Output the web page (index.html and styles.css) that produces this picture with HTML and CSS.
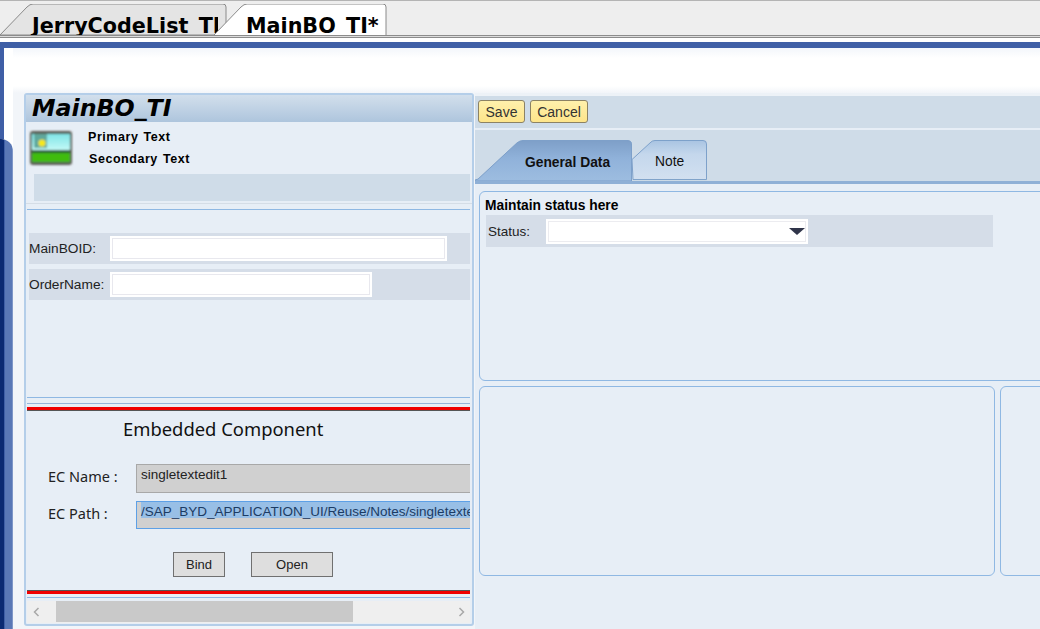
FILE: index.html
```html
<!DOCTYPE html>
<html lang="en">
<head>
<meta charset="utf-8">
<title>MainBO_TI</title>
<link rel="stylesheet" href="styles.css">
</head>
<body>
<header class="doctabs">
  <div class="doctab doctab-back">
    <svg class="tabshape" viewBox="0 0 227 31" preserveAspectRatio="none"><path d="M0 31 L27 3 Q30 0 33 0 L223 0 Q226 0 226 3 L226 24 L214 31 Z" fill="#e4e4e4" stroke="#8a8a8a"/></svg>
    <span class="doctab-text">JerryCodeList_TI</span>
  </div>
  <div class="doctab doctab-front">
    <svg class="tabshape" viewBox="0 0 173 31" preserveAspectRatio="none"><path d="M0 31 L27 3 Q30 0 33 0 L169 0 Q172 0 172 3 L172 31" fill="#fff" stroke="#8a8a8a"/></svg>
    <span class="doctab-text">MainBO_TI*</span>
  </div>
</header>
<div class="doctabs-rule"></div>

<div class="shell">
  <div class="edge">
    <div class="edge-top"></div>
    <div class="edge-body"></div>
  </div>
  <div class="work">
    <section class="left">
      <h1 class="left-title">MainBO_TI</h1>
      <div class="identity">
        <svg class="pic" width="46" height="38" viewBox="0 0 46 38">
          <defs>
            <linearGradient id="sky" x1="0" y1="0" x2="0" y2="1"><stop offset="0" stop-color="#7fe4e6"/><stop offset="1" stop-color="#c8fbf8"/></linearGradient>
            <filter id="soft" x="-10%" y="-10%" width="120%" height="120%"><feGaussianBlur stdDeviation="0.8"/></filter>
          </defs>
          <g filter="url(#soft)">
            <rect x="2" y="2" width="42" height="34" rx="3" fill="#585c52"/>
            <rect x="4" y="5" width="38" height="17" fill="url(#sky)"/>
            <rect x="4" y="21" width="38" height="3" fill="#2a5a30"/>
            <rect x="4" y="24" width="38" height="9" fill="#3fbc08"/>
            <rect x="6" y="5" width="13" height="14" fill="#5fa79c"/>
            <circle cx="14" cy="14" r="3.6" fill="#f6e81a"/>
          </g>
        </svg>
        <div class="identity-text">
          <div class="primary">Primary Text</div>
          <div class="secondary">Secondary Text</div>
        </div>
      </div>
      <div class="gray-bar"></div>
      <div class="rule-soft"></div>
      <div class="rule-blue"></div>
      <div class="fields">
        <div class="field-row">
          <label class="field-label">MainBOID:</label>
          <div class="input input-long"></div>
        </div>
        <div class="field-row">
          <label class="field-label">OrderName:</label>
          <div class="input input-short"></div>
        </div>
      </div>
      <div class="rule-blue rule-a"></div>
      <div class="rule-blue rule-b"></div>
      <div class="red-top"></div>
      <div class="ec">
        <h2 class="ec-title">Embedded Component</h2>
        <div class="ec-row ec-row-name">
          <span class="ec-label">EC Name :</span>
          <div class="ec-input">singletextedit1</div>
        </div>
        <div class="ec-row ec-row-path">
          <span class="ec-label">EC Path :</span>
          <div class="ec-input ec-input-focus"><span class="selected">/SAP_BYD_APPLICATION_UI/Reuse/Notes/singletextedit.EC.uicomponent</span></div>
        </div>
        <div class="ec-actions">
          <button class="ec-btn ec-bind">Bind</button>
          <button class="ec-btn ec-open">Open</button>
        </div>
      </div>
      <div class="red-bottom"></div>
      <div class="rule-blue rule-c"></div>
      <div class="hscroll">
        <svg class="arrow" width="9" height="12" viewBox="0 0 9 12"><path d="M6.5 2 L2.5 6 L6.5 10" fill="none" stroke="#a8a8a8" stroke-width="1.5"/></svg>
        <div class="hscroll-track"><div class="hscroll-thumb"></div></div>
        <svg class="arrow" width="9" height="12" viewBox="0 0 9 12"><path d="M2.5 2 L6.5 6 L2.5 10" fill="none" stroke="#a8a8a8" stroke-width="1.5"/></svg>
      </div>
    </section>

    <section class="right">
      <div class="toolbar">
        <button class="tool-btn tool-save">Save</button>
        <button class="tool-btn tool-cancel">Cancel</button>
      </div>
      <nav class="tabstrip">
        <div class="tab tab-active">
          <svg class="tabshape" viewBox="0 0 158 43" preserveAspectRatio="none">
            <defs><linearGradient id="act" x1="0" y1="0" x2="0" y2="1"><stop offset="0" stop-color="#7e9fc8"/><stop offset="0.45" stop-color="#90b2da"/><stop offset="1" stop-color="#9dbde0"/></linearGradient></defs>
            <path d="M0 42 L3 41 L42 3 Q45 .5 48 .5 L152 .5 Q156.500 .5 156.500 4 L156.500 43 L0 43 Z" fill="url(#act)" stroke="#7c9fc9"/>
          </svg>
          <span class="tab-text">General Data</span>
        </div>
        <div class="tab tab-idle">
          <svg class="tabshape" viewBox="0 0 76 42" preserveAspectRatio="none">
            <defs><linearGradient id="idl" x1="0" y1="0" x2="0" y2="1"><stop offset="0" stop-color="#a9c4e2"/><stop offset="0.35" stop-color="#c4d7ec"/><stop offset="1" stop-color="#d2e0f0"/></linearGradient></defs>
            <path d="M0 20 L18 3 Q20 .5 23 .5 L71 .5 Q74.500 .5 74.500 4 L74.500 40.500 L1 40.500 Z" fill="url(#idl)" stroke="#7c9fc9"/>
          </svg>
          <span class="tab-text">Note</span>
        </div>
      </nav>
      <div class="tab-rule"></div>
      <div class="tabbody">
        <div class="group group-status">
          <div class="group-title">Maintain status here</div>
          <div class="status-row">
            <label class="status-label">Status:</label>
            <div class="combo">
              <svg class="combo-arrow" width="16" height="7" viewBox="0 0 16 7"><path d="M0 0 H16 L8 7 Z" fill="#30354a"/></svg>
            </div>
          </div>
        </div>
        <div class="lower">
          <div class="group group-low"></div>
          <div class="group group-low"></div>
        </div>
      </div>
    </section>
  </div>
</div>
</body>
</html>
```

FILE: styles.css
```css
* { box-sizing: border-box; }
html, body { margin: 0; padding: 0; }
body {
  width: 1040px;
  height: 629px;
  overflow: hidden;
  background: #fff;
  font-family: "Liberation Sans", Arial, sans-serif;
  color: #111;
}

/* document tabs */
.doctabs {
  height: 35px;
  display: flex;
  align-items: flex-end;
  background: #eeeeee;
  border-top: 1px solid #b4b4b4;
}
.doctab {
  position: relative;
  height: 31px;
  overflow: hidden;
  flex: none;
}
.doctab-back { width: 227px; }
.doctab-front { width: 173px; margin-left: -13px; }
.tabshape {
  position: absolute;
  left: 0;
  top: 0;
  width: 100%;
  height: 100%;
}
.doctab-text {
  position: relative;
  display: block;
  font: bold 20.700px/25px "DejaVu Sans", sans-serif;
  color: #000;
  padding-top: 10px;
  white-space: nowrap;
  overflow: hidden;
}
.doctab-back .doctab-text { padding-left: 32px; margin-right: 9px; }
.doctab-front .doctab-text { padding-left: 32px; }
.doctabs-rule {
  height: 7px;
  border-top: 1px solid #8c8c8c;
  background: linear-gradient(#dcdcdc 0 1px, #8c8c8c 1px 2px, #fff 2px);
}

/* shell */
.shell {
  display: flex;
  height: 587px;
  border-top: 6px solid #3f5fa6;
}
.edge {
  width: 13px;
  flex: none;
  display: flex;
  flex-direction: column;
}
.edge-top {
  height: 91px;
  width: 4px;
  background: #3f5fa6;
}
.edge-body {
  flex: 1;
  border-top-right-radius: 12px;
  background: linear-gradient(90deg, #0b2a72 0 4px, #3f5fa6 4px 5px, #5a78b6 5px 12px, #7f97c8 12px);
}
.work {
  flex: 1;
  min-width: 0;
  display: grid;
  grid-template-columns: 450px 1fr;
  column-gap: 1px;
  padding: 45px 0 0 11px;
  background: linear-gradient(#f3f6fb 0, #fff 10px, #fff 38px, #f2f5f9 45px);
  align-items: start;
  overflow: hidden;
}

/* left panel */
.left {
  height: 533px;
  background: #e7eef6;
  border: 2px solid #b4cee9;
  border-radius: 3px;
  display: flex;
  flex-direction: column;
}
.left-title {
  height: 27px;
  margin: 0;
  padding-left: 6px;
  font: italic bold 23.700px/26px "DejaVu Sans", sans-serif;
  color: #000;
  background: linear-gradient(#d2dfec, #aec5dd);
}
.identity {
  height: 52px;
  display: flex;
  padding: 7px 0 0 2px;
}
.pic { flex: none; }
.identity-text {
  margin-left: 14px;
  padding-top: 1px;
  font-weight: bold;
  font-size: 12.500px;
  letter-spacing: .55px;
  word-spacing: 1px;
  color: #000;
}
.primary { height: 22px; line-height: 15px; }
.secondary { line-height: 15px; padding-left: 1px; }
.gray-bar {
  height: 27px;
  margin: 0 2px 0 8px;
  background: #cfdce8;
}
.rule-soft { height: 1px; margin-top: 2px; background: #d5dde6; }
.rule-blue { height: 1px; background: #8fb8e3; margin: 0 2px 0 1px; }
.rule-soft + .rule-blue { margin-top: 5px; }
.fields {
  height: 187px;
  padding: 23px 2px 0 3px;
  display: flex;
  flex-direction: column;
  gap: 5px;
}
.field-row {
  height: 31px;
  background: #d5dde8;
  display: flex;
  align-items: center;
}
.field-label {
  width: 81px;
  flex: none;
  font-size: 13.700px;
  color: #222;
}
.input {
  height: 25px;
  background: #fff;
  border: 2px solid #fff;
  box-shadow: inset 0 0 0 1px #e8e8ee;
}
.input-long { width: 337px; }
.input-short { width: 262px; }
.rule-b { margin-top: 5px; background: #96b4d8; }
.red-top {
  height: 4px;
  margin: 3px 2px 0 1px;
  background: linear-gradient(#f00000 0 3px, #555 3px);
}
.ec {
  height: 179px;
  padding: 0 2px 0 1px;
  display: flex;
  flex-direction: column;
  overflow: hidden;
}
.ec-title {
  margin: 6px 0 0 96px;
  height: 31px;
  font: 400 18.400px/24px "Noto Sans", sans-serif;
  color: #111;
}
.ec-row {
  display: flex;
  align-items: flex-start;
}
.ec-row-name { margin-top: 16px; height: 37px; }
.ec-row-path { height: 28px; }
.ec-label {
  width: 109px;
  flex: none;
  padding: 2px 0 0 21px;
  font: 14.500px/20px "Noto Sans", sans-serif;
  color: #222;
}
.ec-input {
  flex: 1;
  min-width: 0;
  height: 29px;
  padding: 0 0 0 4px;
  background: #d0d0d0;
  border: 1px solid #a8a8a8;
  border-right: 0;
  font: 13.500px/20px "Liberation Sans", sans-serif;
  color: #222;
  white-space: nowrap;
  overflow: hidden;
}
.ec-input-focus {
  height: 28px;
  border-color: #5da0e6;
  color: #1c3c64;
}
.selected { background: #98bfe6; display: block; width: max-content; height: 16px; }
.ec-actions {
  display: flex;
  margin: 23px 0 0 146px;
  gap: 26px;
}
.ec-btn {
  height: 25px;
  padding: 1px 0 0;
  background: #dedede;
  border: 1px solid #707070;
  border-radius: 0;
  font: 13px/20px "Liberation Sans", sans-serif;
  color: #222;
}
.ec-bind { width: 52px; }
.ec-open { width: 82px; }
.red-bottom {
  height: 4px;
  margin: 0 2px 0 1px;
  background: linear-gradient(#555 0 1px, #f00000 1px);
}
.rule-c { margin-top: 3px; }
.hscroll {
  height: 22px;
  margin: 3px 2px 0 1px;
  background: #efefef;
  display: flex;
  align-items: center;
  padding: 0 4px 0 5px;
}
.arrow { flex: none; }
.hscroll-track { flex: 1; height: 100%; padding-left: 15px; }
.hscroll-thumb { width: 297px; height: 21px; background: #c9c9c9; }

/* right side */
.right {
  display: flex;
  flex-direction: column;
  height: 536px;
  background: #e7eef6;
}
.toolbar {
  height: 37px;
  padding: 7px 0 0 3px;
  display: flex;
  align-items: flex-start;
  gap: 5px;
  background: linear-gradient(#edf2f7 0 3px, #cfdce8 3px 35px, #e7eef6 35px);
}
.tool-btn {
  height: 23px;
  padding: 0;
  background: linear-gradient(#fff0ac, #fee58a);
  border: 1px solid #8c8264;
  border-radius: 3px;
  font: 14px/20px "Liberation Sans", sans-serif;
  color: #333;
}
.tool-save { width: 47px; }
.tool-cancel { width: 58px; }
.tabstrip {
  height: 51px;
  padding-top: 10px;
  display: flex;
  align-items: flex-start;
  background: #cfdce8;
}
.tab { position: relative; flex: none; display: flex; align-items: center; }
.tab-active { width: 158px; height: 41px; padding: 4px 0 0 50px; }
.tab-idle { width: 76px; height: 41px; margin-left: -1px; padding: 2px 0 0 23px; }
.tab-text { position: relative; font-size: 13.800px; color: #111; }
.tab-active .tab-text { font-weight: bold; }
.tab-rule { height: 3px; background: #8fb0d6; }
.tabbody {
  flex: 1;
  padding: 7px 0 0 4px;
  display: flex;
  flex-direction: column;
  gap: 5px;
  background: #e7eef6;
}
.group {
  border: 1px solid #8fb8e3;
  border-radius: 6px;
  background: #e7eef6;
}
.group-status {
  width: 600px;
  height: 190px;
  padding: 6px 0 0 5px;
}
.group-title {
  font: bold 13.800px/16px "Liberation Sans", sans-serif;
  color: #000;
}
.status-row {
  width: 507px;
  height: 32px;
  margin: 1px 0 0 1px;
  background: #d5dde8;
  display: flex;
  align-items: center;
  padding-left: 2px;
}
.status-label { width: 58px; flex: none; font-size: 13.500px; color: #222; }
.combo {
  width: 262px;
  height: 25px;
  background: #fff;
  border: 2px solid #fff;
  box-shadow: inset 0 0 0 1px #ececf0;
  display: flex;
  align-items: center;
  justify-content: flex-end;
  padding-right: 1px;
}
.lower { display: flex; gap: 5px; width: 600px; }
.group-low { height: 190px; flex: none; }
.group-low:first-child { width: 516px; }
.group-low:last-child { width: 79px; }
```
